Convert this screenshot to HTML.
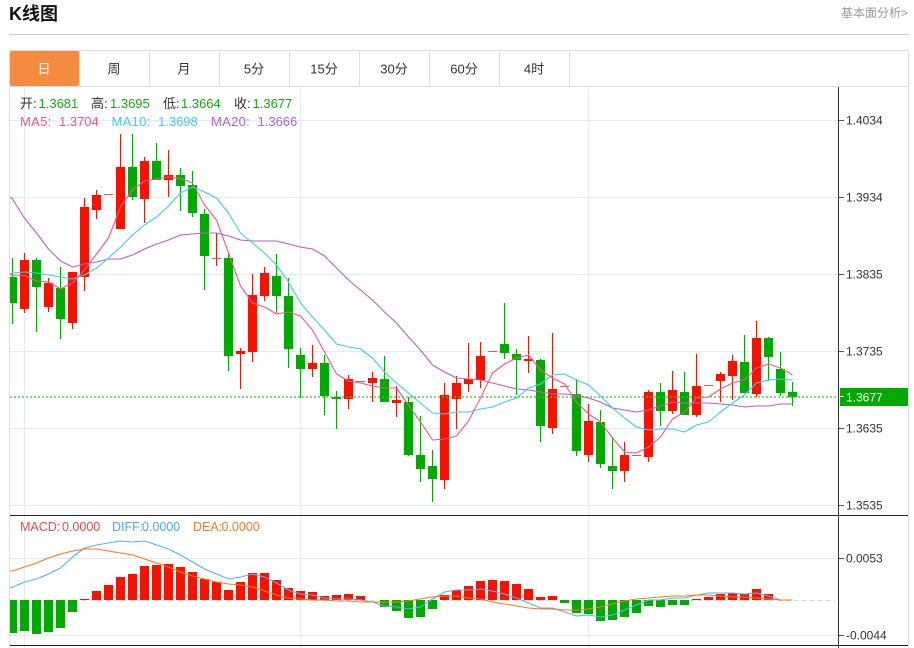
<!DOCTYPE html>
<html><head><meta charset="utf-8"><title>K线图</title>
<style>
html,body{margin:0;padding:0;background:#fff;width:914px;height:648px;overflow:hidden}
svg{display:block;font-family:"Liberation Sans","Noto Sans CJK SC",sans-serif}
.l{fill:none;stroke-width:1.1;stroke-linejoin:round}
</style></head><body>
<svg width="914" height="648" viewBox="0 0 914 648" xmlns="http://www.w3.org/2000/svg">
<text x="9" y="20" font-size="18" font-weight="bold" fill="#111">K线图</text>
<text x="908" y="17" font-size="12" fill="#999" text-anchor="end">基本面分析&gt;</text>
<path d="M9 34.5H909" stroke="#ccc" fill="none" shape-rendering="crispEdges"/>
<!-- frame -->
<g shape-rendering="crispEdges" fill="none">
<path d="M9 50.5H909M9.5 50V648M908.5 50V648M9 86.5H909" stroke="#ddd"/>
<path d="M79.5 51V86M149.5 51V86M219.5 51V86M289.5 51V86M359.5 51V86M429.5 51V86M499.5 51V86M569.5 51V86" stroke="#ddd"/>
<!-- grid -->
<path d="M10 120.5H838M10 197.5H838M10 274.5H838M10 351.5H838M10 428.5H838M10 505.5H838M10 558.5H838M10 635.5H838M24.5 87V648M300.5 87V648M588.5 87V648" stroke="#e1ebf2"/>
</g>
<rect x="10" y="51" width="69" height="35" rx="2" fill="#f48b3e"/>
<g font-size="13" fill="#333" text-anchor="middle">
<text x="44" y="73.500" fill="#fff">日</text><text x="114" y="73.500">周</text><text x="184" y="73.500">月</text><text x="254" y="73.500">5分</text><text x="324" y="73.500">15分</text><text x="394" y="73.500">30分</text><text x="464" y="73.500">60分</text><text x="534" y="73.500">4时</text>
</g>
<clipPath id="c"><rect x="10" y="87" width="828" height="558"/></clipPath>
<g clip-path="url(#c)">
<!-- wicks red -->
<path shape-rendering="crispEdges" fill="none" stroke="#f51300" d="M24.500 253V313M48.500 278V312M72.500 272V329M84.500 198V291M96.500 190V219M120.500 134V229M144.500 157V223M168.500 150V197M216.500 233V266M240.500 348V389M252.500 274V362M264.500 267V301M312.500 345V377M348.500 375V409M372.500 372V402M396.500 386V417M444.500 383V489M456.500 376V429M468.500 343V392M480.500 342V388M528.500 336V373M552.500 333V434M588.500 404V462M624.500 442V482M648.500 390V462M672.500 371V414M696.500 354V417M720.500 372V402M732.500 355V400M756.500 321V397"/>
<!-- wicks green -->
<path shape-rendering="crispEdges" fill="none" stroke="#02a902" d="M12.500 258V324M36.500 258V332M60.500 267V339M132.500 134V200M156.500 143V180M180.500 168V211M192.500 171V217M204.500 209V290M228.500 253V371M276.500 254V313M288.500 278V368M300.500 348V398M324.500 355V415M336.500 391V429M384.500 356V402M408.500 397V456M420.500 416V482M432.500 450V502M504.500 303V359M516.500 349V395M540.500 359V442M576.500 379V456M600.500 410V468M612.500 437V489M660.500 383V426M684.500 372V415M744.500 335V393M768.500 337V381M780.500 352V396M792.500 382V406"/>
<!-- bodies red -->
<path shape-rendering="crispEdges" fill="#f51300" d="M20 260h9V309h-9zM44 283h9V307h-9zM68 272h9V323h-9zM80 207h9V277h-9zM92 195h9V210h-9zM116 167h9V229h-9zM140 161h9V199h-9zM164 175h9V180h-9zM236 351h9V354h-9zM248 295h9V352h-9zM260 273h9V296h-9zM308 363h9V369h-9zM344 379h9V399h-9zM368 378h9V383h-9zM392 400h9V403h-9zM440 395h9V480h-9zM452 383h9V399h-9zM464 379h9V384h-9zM476 356h9V380h-9zM524 359h9V361h-9zM548 389h9V428h-9zM584 421h9V455h-9zM620 455h9V471h-9zM644 392h9V457h-9zM668 390h9V411h-9zM692 386h9V415h-9zM716 374h9V381h-9zM728 361h9V376h-9zM752 338h9V394h-9z"/>
<!-- doji -->
<path shape-rendering="crispEdges" fill="#f8584a" d="M104 194h9v1h-9zM212 258h9v1h-9zM356 381h9v1h-9zM488 351h9v1h-9zM560 386h9v1h-9zM632 455h9v1h-9zM704 385h9v1h-9z"/>
<!-- bodies green -->
<path shape-rendering="crispEdges" fill="#02a902" d="M8 277h9V303H8zM32 260h9V287h-9zM56 288h9V319h-9zM128 167h9V197h-9zM152 161h9V180h-9zM176 175h9V186h-9zM188 185h9V213h-9zM200 214h9V256h-9zM224 258h9V356h-9zM272 276h9V296h-9zM284 296h9V349h-9zM296 355h9V369h-9zM320 363h9V396h-9zM332 397h9V399h-9zM380 379h9V402h-9zM404 402h9V455h-9zM416 455h9V469h-9zM428 466h9V479h-9zM500 344h9V353h-9zM512 354h9V360h-9zM536 360h9V426h-9zM572 394h9V451h-9zM596 422h9V464h-9zM608 466h9V471h-9zM656 392h9V411h-9zM680 392h9V415h-9zM740 362h9V393h-9zM764 338h9V357h-9zM776 369h9V393h-9zM788 392h9V397h-9z"/>
<!-- MA lines -->
<polyline class="l" stroke="#b55fc8" points="10,197 12.5,199 24.5,218 36.5,233 48.5,249 60.5,261 72.5,267 84.5,264 96.5,262 108.5,259 120.5,259 132.5,255 144.5,249 156.5,244 168.5,240 180.5,235 192.5,234 204.5,233 216.5,233 228.5,236 240.500,240 252.5,241 264.5,241 276.5,241 288.5,244 300.5,247 312.5,249 324.5,256 336.5,268 348.5,280 360.5,290 372.5,300 384.5,312 396.5,323 408.5,337 420.5,350 432.5,365 444.5,372 456.5,378 468.5,379 480.5,380 492.5,383 504.5,386 516.5,389 528.5,390 540.5,392 552.5,394 564.5,394 576.5,395 588.5,398 600.5,402 612.5,408 624.5,410 636.5,412 648.5,410 660.5,406 672.5,402 684.5,403 696.5,403 708.5,403 720.5,404 732.5,405 744.5,407 756.5,406 768.5,406 780.5,404 792.5,404"/>
<polyline class="l" stroke="#3fcde6" points="10,274 12.5,273 24.5,272 36.5,273 48.5,275 60.5,277 72.5,279 84.5,275 96.5,268 108.5,258 120.5,247 132.5,235 144.5,225 156.5,217 168.5,206 180.5,193 192.5,187 204.5,192 216.5,198 228.5,213 240.5,233 252.5,243 264.5,253 276.5,265 288.5,282 300.5,303 312.5,317 324.5,330 336.5,344 348.5,347 360.5,349 372.5,358 384.5,372 396.5,383 408.5,393 420.5,403 432.5,413 444.5,414 456.5,412 468.5,412 480.5,409 492.5,407 504.5,402 516.5,398 528.5,388 540.5,384 552.5,375 564.5,374 576.5,380 588.5,385 600.5,396 612.5,408 624.5,418 636.5,427 648.5,430 660.5,429 672.5,429 684.5,432 696.5,425 708.5,422 720.5,412 732.5,403 744.5,395 756.5,383 768.5,380 780.5,379 792.5,380"/>
<polyline class="l" stroke="#f0568c" points="10,274 12.5,275 24.5,275.5 36.5,281 48.5,282 60.5,289 72.5,283 84.5,270 96.5,254 108.5,238 120.5,207 132.5,190 144.5,181 156.5,179 168.5,177 180.5,178.5 192.5,183 204.5,205 216.5,220 228.5,253 240.5,286 252.5,303 264.5,307 276.5,314 288.5,312 300.5,316 312.5,330 324.5,352 336.5,374 348.5,381 360.5,383 372.5,386 384.5,388 396.5,388 408.5,405 420.5,422 432.5,440 444.5,439 456.5,436 468.5,421 480.5,398 492.5,373 504.5,364 516.5,358 528.5,355 540.5,370 552.5,378 564.5,384 576.5,402 588.5,414 600.5,422 612.5,438 624.5,452 636.5,453 648.5,447 660.5,437 672.5,419 684.5,412 696.5,398 708.5,397 720.5,389 732.5,383 744.5,380 756.5,368 768.5,364 780.5,368 792.5,375"/>
<!-- dotted close line -->
<path d="M10 397H838" fill="none" stroke="#3dbb3d" stroke-width="1.2" stroke-dasharray="2 2"/>
<!-- MACD zero -->
<path d="M10 600.500H835" fill="none" stroke="#b5e0ee" stroke-dasharray="4 4" shape-rendering="crispEdges"/>
<!-- MACD bars -->
<path shape-rendering="crispEdges" fill="#02a902" d="M8 600h9V633H8zM20 600h9V631h-9zM32 600h9V634h-9zM44 600h9V632h-9zM56 600h9V628h-9zM68 600h9V612h-9zM380 600h9V607h-9zM392 600h9V611h-9zM404 600h9V618h-9zM416 600h9V617h-9zM428 600h9V609h-9zM560 600h9V603h-9zM572 600h9V613h-9zM584 600h9V614h-9zM596 600h9V621h-9zM608 600h9V620h-9zM620 600h9V617h-9zM632 600h9V613h-9zM644 600h9V606h-9zM656 600h9V607h-9zM668 600h9V605h-9zM680 600h9V605h-9z"/>
<path shape-rendering="crispEdges" fill="#f51300" d="M80 599h9v1h-9zM92 591h9v9h-9zM104 585h9v15h-9zM116 577h9v23h-9zM128 574h9v26h-9zM140 566h9v34h-9zM152 565h9v35h-9zM164 564h9v36h-9zM176 567h9v33h-9zM188 572h9v28h-9zM200 579h9v21h-9zM212 582h9v18h-9zM224 590h9v10h-9zM236 582h9v18h-9zM248 573h9v27h-9zM260 573h9v27h-9zM272 580h9v20h-9zM284 588h9v12h-9zM296 591h9v9h-9zM308 592h9v8h-9zM320 596h9v4h-9zM332 595h9v5h-9zM344 594h9v6h-9zM356 596h9v4h-9zM440 595h9v5h-9zM452 590h9v10h-9zM464 586h9v14h-9zM476 581h9v19h-9zM488 580h9v20h-9zM500 581h9v19h-9zM512 584h9v16h-9zM524 589h9v11h-9zM536 597h9v3h-9zM548 596h9v4h-9zM692 599h9v1h-9zM704 597h9v3h-9zM716 594h9v6h-9zM728 593h9v7h-9zM740 594h9v6h-9zM752 589h9v11h-9zM764 594h9v6h-9z"/>
<polyline class="l" stroke="#5ab0f0" points="10,588 12.5,587 24.5,582 36.5,579 48.5,574 60.5,568 72.5,557 84.5,548 96.5,545 108.5,543 120.5,541 132.5,542 144.5,541 156.5,545 168.5,549 180.5,555 192.5,562 204.5,569 216.5,574 228.5,579 240.5,577 252.5,574 264.5,577 276.5,583 288.5,590 300.5,594 312.5,595 324.5,598 336.5,599 348.5,599 360.5,600 372.5,602 384.5,606 396.5,607 408.5,609 420.5,607 432.5,599 444.5,592 456.5,590 468.5,590 480.5,589 492.5,591 504.5,594 516.5,598 528.5,603 540.5,608 552.5,608 564.5,612 576.5,616 588.5,615 600.5,617 612.5,615 624.5,610 636.5,605 648.5,600 660.5,600 672.5,598 684.5,598 696.5,595 708.5,593 720.5,593 732.5,593 744.5,594 756.5,593 768.5,596 780.5,600 792.5,600"/>
<polyline class="l" stroke="#f97a1f" points="10,571 12.5,571 24.5,567 36.5,563 48.5,558 60.5,554 72.5,551 84.5,549 96.5,549 108.5,551 120.5,553 132.5,555 144.5,559 156.5,563 168.5,567 180.5,572 192.5,576 204.5,579 216.5,582 228.5,584 240.5,585 252.5,587 264.5,591 276.5,595 288.5,598 300.5,599 312.5,600 324.5,600 336.5,601 348.5,601 360.5,602 372.5,602 384.5,602 396.5,602 408.5,601 420.5,599 432.5,597 444.5,596 456.5,596 468.5,598 480.5,599 492.5,602 504.5,604 516.5,606 528.5,608 540.5,609 552.5,609 564.5,610 576.5,610 588.5,609 600.5,607 612.5,604 624.5,601 636.5,599 648.5,598 660.5,597 672.5,596 684.5,596 696.5,595 708.5,595 720.5,596 732.5,597 744.5,597 756.5,598 768.5,599 780.5,600 792.5,600"/>
</g>
<!-- axis -->
<g shape-rendering="crispEdges" fill="none">
<path d="M838.500 87V648" stroke="#333"/>
<path d="M10 515.500H908M10 645.500H908" stroke="#222"/>
<path d="M839 120.500h5M839 197.500h5M839 274.500h5M839 351.500h5M839 428.500h5M839 505.500h5M839 558.500h5M839 635.500h5" stroke="#555"/>
</g>
<rect x="840" y="388" width="68" height="18" fill="#02a902"/>
<path d="M840 396.500h4" stroke="#fff" shape-rendering="crispEdges"/>
<g font-size="12" fill="#333">
<text x="846" y="124.500">1.4034</text><text x="846" y="201.500">1.3934</text><text x="846" y="278.500">1.3835</text><text x="846" y="355.500">1.3735</text><text x="846" y="432.500">1.3635</text><text x="846" y="509.500">1.3535</text><text x="846" y="562.500">0.0053</text><text x="846" y="639.500">-0.0044</text>
<text x="846" y="401.500" fill="#fff">1.3677</text>
</g>
<g font-size="13">
<g fill="#333"><text x="20" y="108">开:</text><text x="91" y="108">高:</text><text x="163" y="108">低:</text><text x="234" y="108">收:</text></g>
<g fill="#13a813"><text x="38.500" y="108">1.3681</text><text x="110" y="108">1.3695</text><text x="181" y="108">1.3664</text><text x="252.500" y="108">1.3677</text></g>
<g fill="#f0568c"><text x="20" y="126" letter-spacing=".3">MA5:</text><text x="59" y="126">1.3704</text></g>
<g fill="#3fcde6"><text x="111.500" y="126" letter-spacing=".3">MA10:</text><text x="158" y="126">1.3698</text></g>
<g fill="#b55fc8"><text x="211" y="126" letter-spacing=".3">MA20:</text><text x="257.500" y="126">1.3666</text></g>
<g font-size="12.500">
<g fill="#f04848"><text x="20" y="531">MACD:</text><text x="62" y="531">0.0000</text></g>
<g fill="#4ea8ee"><text x="112" y="531">DIFF:</text><text x="142" y="531">0.0000</text></g>
<g fill="#f97a1f"><text x="193" y="531">DEA:</text><text x="221.500" y="531">0.0000</text></g>
</g>
</g>
</svg>
</body></html>
